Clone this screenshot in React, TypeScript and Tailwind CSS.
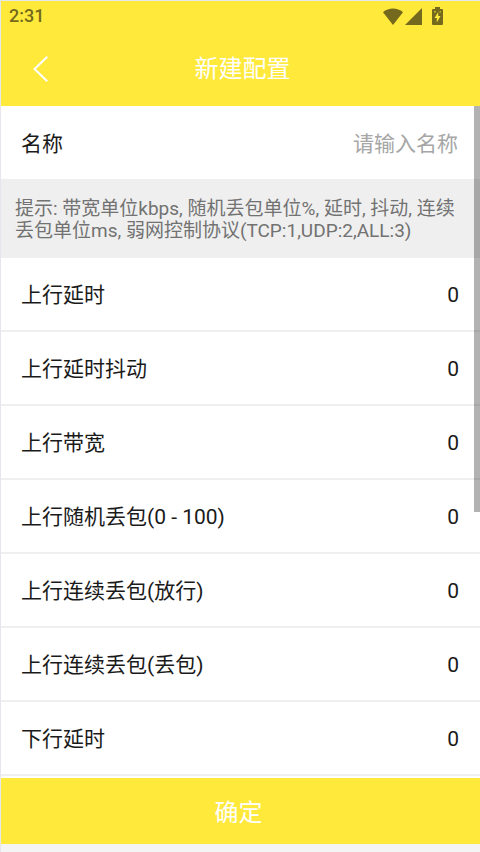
import { useState } from "react";

interface Field {
  id: string;
  label: string;
}

const FIELDS: Field[] = [
  { id: "up-delay", label: "上行延时" },
  { id: "up-jitter", label: "上行延时抖动" },
  { id: "up-bandwidth", label: "上行带宽" },
  { id: "up-random-loss", label: "上行随机丢包(0 - 100)" },
  { id: "up-burst-pass", label: "上行连续丢包(放行)" },
  { id: "up-burst-loss", label: "上行连续丢包(丢包)" },
  { id: "down-delay", label: "下行延时" },
];

function StatusBar() {
  return (
    <div className="flex h-[30px] items-center justify-between pl-2 pr-[37px] text-[#74691c]">
      <span className="text-lg font-medium">2:31</span>
      <div className="flex items-center">
        <svg viewBox="0 0 20 17" className="h-[17px] w-5" fill="currentColor" aria-hidden="true">
          <path d="M0 4.2C5.8-.8 14.2-.8 20 4.2L10 17Z" />
        </svg>
        <svg viewBox="0 0 17 17" className="ml-0.5 h-[17px] w-[17px]" fill="currentColor" aria-hidden="true">
          <path d="M17 0v17H0Z" />
        </svg>
        <svg viewBox="0 0 11 18" className="ml-[10px] h-[18px] w-[11px]" aria-hidden="true">
          <path d="M3 0h5v2h2q1 0 1 1v14q0 1-1 1H1q-1 0-1-1V3q0-1 1-1h2Z" fill="currentColor" />
          <path d="M6.2 5 2.5 11h2.3v4.500L8.500 9H6.200Z" fill="#ffe93b" />
          <path d="M2 4h2v1.500H2ZM7.500 4h1.500v1.500H7.500Z" fill="#ffe93b" fillOpacity="0.6" />
        </svg>
      </div>
    </div>
  );
}

function FieldRow({ field, value, onChange }: { field: Field; value: string; onChange: (v: string) => void }) {
  return (
    <div className="flex h-[74px] items-center border-b-2 border-[#efefef] pl-5 pr-[21px] pt-1">
      <label htmlFor={field.id} className="shrink-0">
        {field.label}
      </label>
      <input
        id={field.id}
        inputMode="numeric"
        value={value}
        onChange={(e) => onChange(e.target.value)}
        className="min-w-0 flex-1 bg-transparent text-right outline-none"
      />
    </div>
  );
}

export default function App() {
  const [name, setName] = useState("");
  const [values, setValues] = useState<Record<string, string>>({});

  return (
    <div className="flex min-h-screen flex-col border-l border-t border-[#e6e6ec] bg-white font-[Roboto,'Noto_Sans_CJK_SC',sans-serif] text-[21px] text-[#1a1a1a]">
      <header className="bg-[#ffe93b]">
        <StatusBar />
        <div className="grid h-[75px] grid-cols-[80px_1fr_76px] items-center text-white">
          <button type="button" aria-label="返回" className="pl-8">
            <svg viewBox="0 0 15 26" className="h-[26px] w-[15px]" fill="none" stroke="currentColor" strokeWidth="2" aria-hidden="true">
              <path d="M14.300.700 1.500 13l12.800 12.300" />
            </svg>
          </button>
          <h1 className="text-center text-2xl">新建配置</h1>
        </div>
      </header>

      <main className="relative flex-1">
        <div className="flex h-[73px] items-center pl-5 pr-[22px] pt-1">
          <label htmlFor="name" className="shrink-0">
            名称
          </label>
          <input
            id="name"
            value={name}
            onChange={(e) => setName(e.target.value)}
            placeholder="请输入名称"
            className="min-w-0 flex-1 bg-transparent text-right outline-none placeholder:text-[#a6a6a6]"
          />
        </div>
        <p className="bg-[#efefef] pb-4 pl-[14px] pr-5 pt-[19px] text-[19px] leading-[22px] text-[#727272]">
          提示: 带宽单位kbps, 随机丢包单位%, 延时, 抖动, 连续丢包单位ms, 弱网控制协议(TCP:1,UDP:2,ALL:3)
        </p>
        {FIELDS.map((f) => (
          <FieldRow
            key={f.id}
            field={f}
            value={values[f.id] ?? "0"}
            onChange={(v) => setValues({ ...values, [f.id]: v })}
          />
        ))}
        {/* scroll indicator */}
        <div className="absolute right-0 top-0 h-[406px] w-1.5 bg-black/30" />
      </main>

      <footer className="border-b-8 border-[#f4f4f4]">
        <button type="button" className="h-[66px] w-full bg-[#ffe93b] pr-1 pt-1 text-2xl text-white">
          确定
        </button>
      </footer>
    </div>
  );
}
